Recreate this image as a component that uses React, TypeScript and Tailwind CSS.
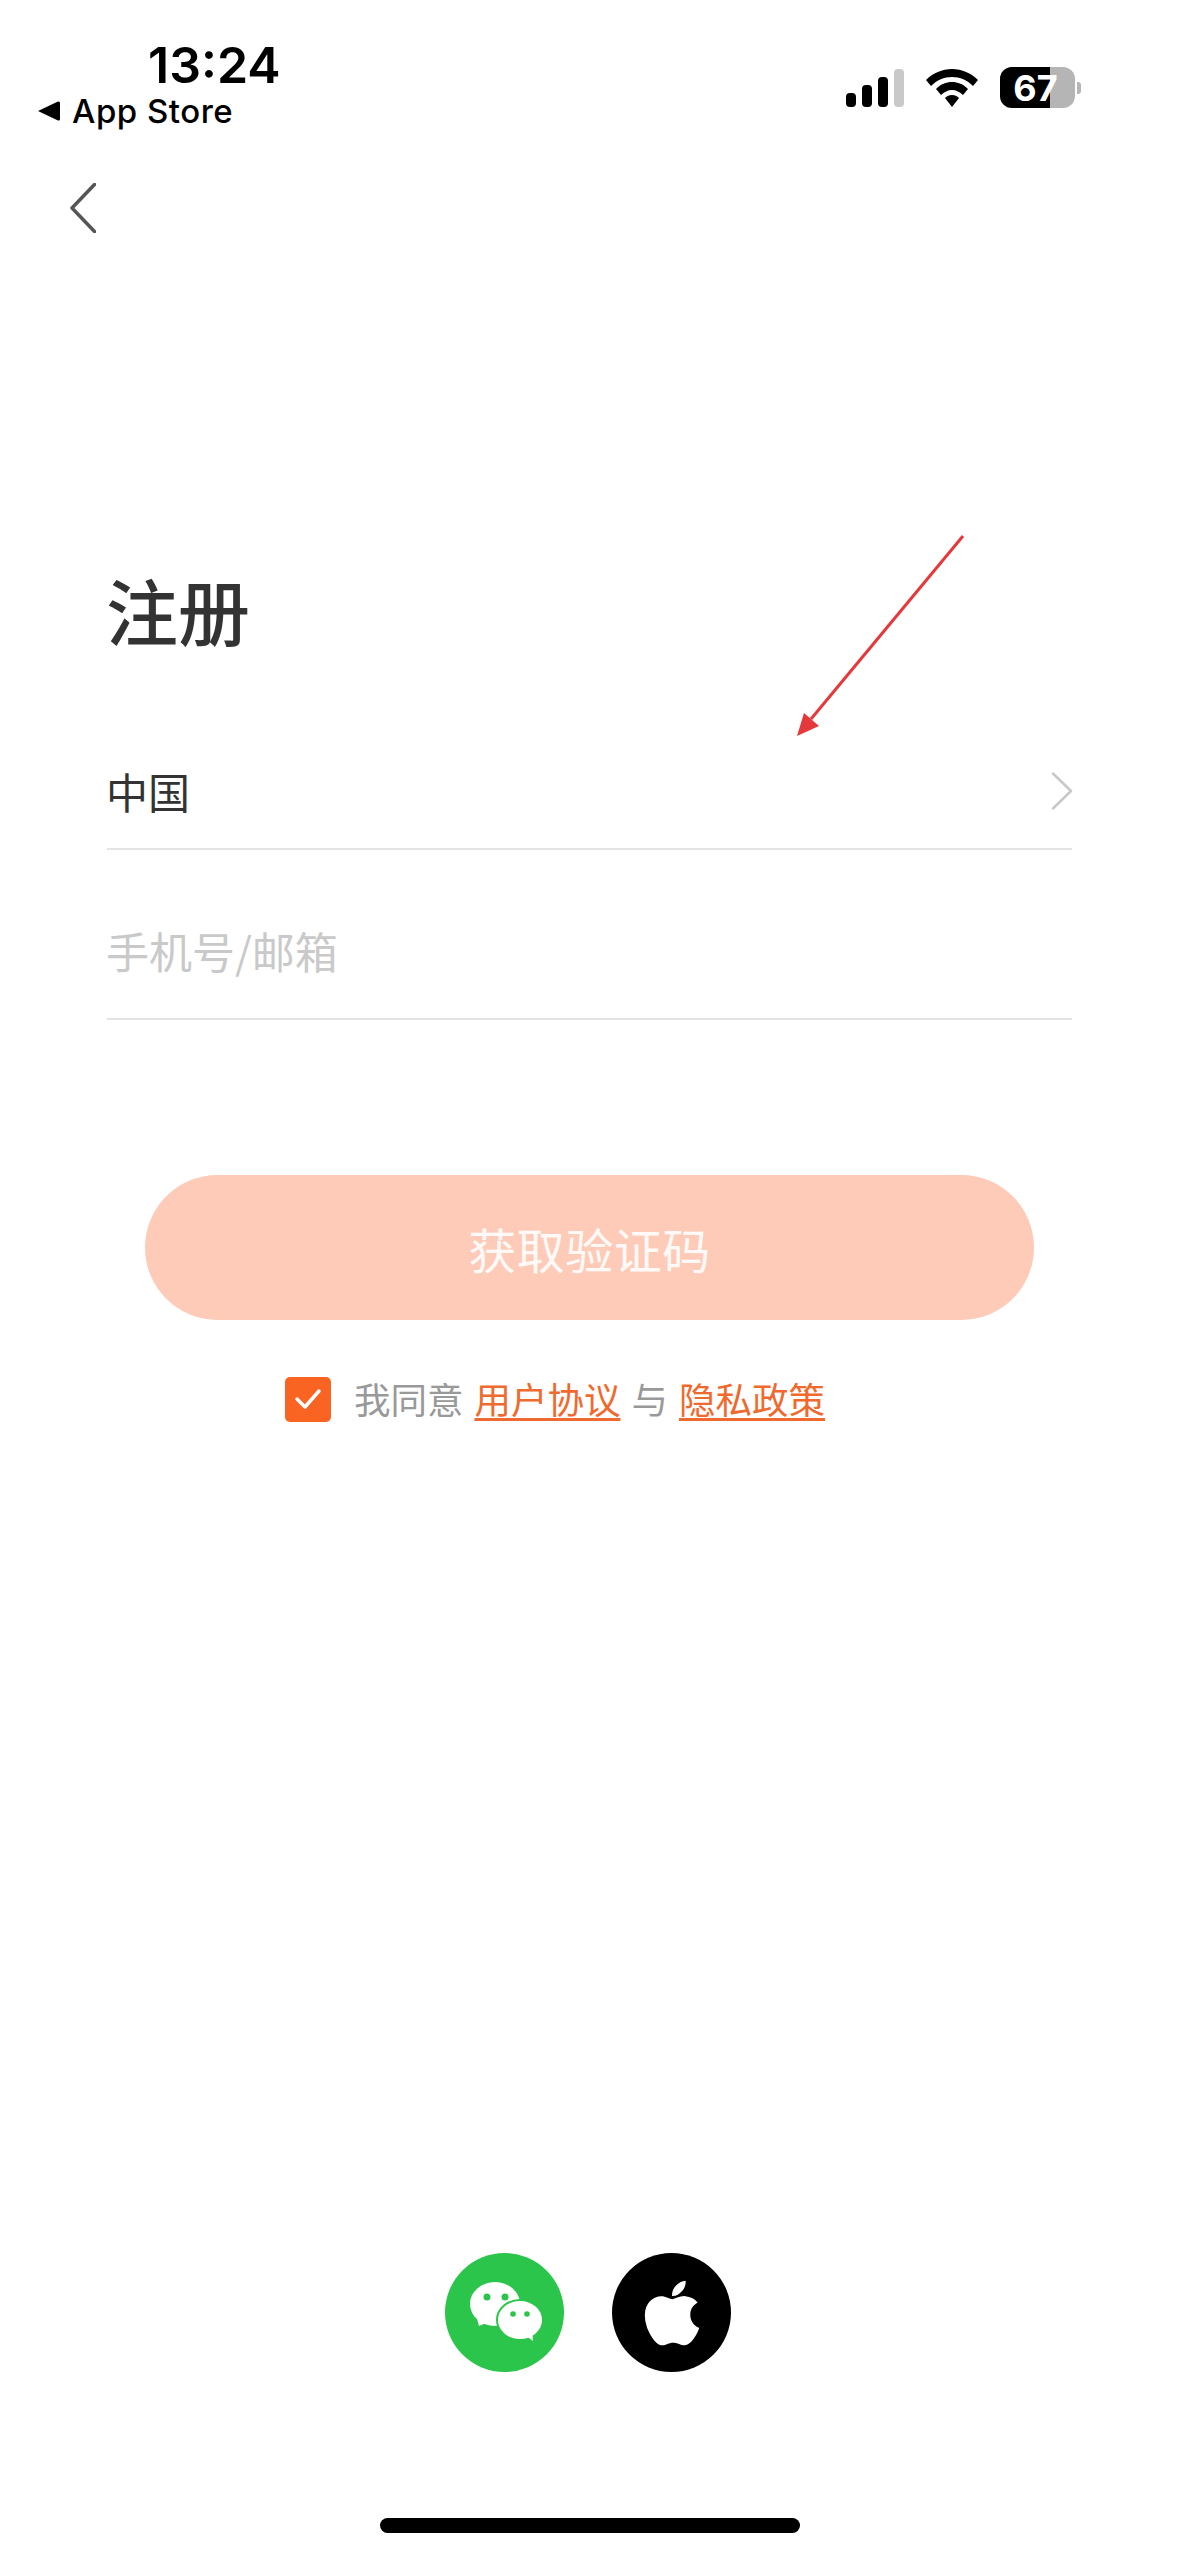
import { FaApple } from 'react-icons/fa';

const cjk = 'font-["Noto_Sans_CJK_SC","Noto_Sans",sans-serif]';

function StatusBar() {
  return (
    <div className="flex h-[140px] items-start justify-between pl-[38px] pr-[98px] pt-[37px]">
      <div className="flex flex-col">
        <span className="ml-[110px] font-['Inter'] text-[50px] font-semibold leading-[56px] text-black">13:24</span>
        <div className="-mt-[2px] flex items-center gap-[12px]">
          <svg width="22" height="20" viewBox="0 0 22 20">
            <path d="M0 10 L20 0.5 Q22 0 22 2 L22 18 Q22 20 20 19.5 Z" fill="#000" />
          </svg>
          <span className="font-['Inter'] text-[33px] font-medium leading-[40px] tracking-[0.5px] text-black">App Store</span>
        </div>
      </div>
      <div className="mt-[30px] flex items-center">
        <svg width="60" height="38" viewBox="0 0 60 38">
          <rect x="0" y="24" width="10" height="14" rx="4" fill="#000" />
          <rect x="16" y="16" width="10" height="22" rx="4" fill="#000" />
          <rect x="32" y="8" width="10" height="30" rx="4" fill="#000" />
          <rect x="48" y="0" width="10" height="38" rx="4" fill="#c9c9c9" />
        </svg>
        <svg className="ml-[20px]" width="52" height="38" viewBox="0 0 52 38">
          <path d="M26 0 C36 0 45 4 52 11 L47 17 C41 11 34 8 26 8 C18 8 11 11 5 17 L0 11 C7 4 16 0 26 0 Z" fill="#000" />
          <path d="M26 13 C32 13 37 15 42 20 L37 26 C34 23 30 21 26 21 C22 21 18 23 15 26 L10 20 C15 15 20 13 26 13 Z" fill="#000" />
          <path d="M26 26 C29 26 31 27 33 29 L26 38 L19 29 C21 27 23 26 26 26 Z" fill="#000" />
        </svg>
        <div className="ml-[22px] flex items-center">
          <div className="relative flex h-[41px] w-[75px] items-center justify-center overflow-hidden rounded-[12px] bg-[#b5b5b5] pr-[4px]">
            <div className="absolute inset-y-0 left-0 w-[50px] bg-black" />
            <span className="relative font-['Inter'] text-[36px] font-bold leading-none text-white">67</span>
          </div>
          <div className="ml-[2px] h-[12px] w-[4px] rounded-r-[3px] bg-[#b5b5b5]" />
        </div>
      </div>
    </div>
  );
}

function WechatBadge() {
  return (
    <div className="h-[119px] w-[119px] rounded-full bg-[#2cc54b]">
      <svg width="119" height="119" viewBox="0 0 119 119">
        <ellipse cx="50" cy="51" rx="25" ry="22" fill="#fff" />
        <path d="M31 62 L34 73 L46 68 Z" fill="#fff" />
        <ellipse cx="75" cy="67" rx="23" ry="20" fill="#fff" stroke="#2cc54b" strokeWidth="2" />
        <path d="M80 82 L88 88 L87 76 Z" fill="#fff" />
        <circle cx="42" cy="44" r="3.5" fill="#2cc54b" />
        <circle cx="60" cy="44" r="3.5" fill="#2cc54b" />
        <circle cx="68" cy="61" r="2.8" fill="#2cc54b" />
        <circle cx="82" cy="61" r="2.8" fill="#2cc54b" />
      </svg>
    </div>
  );
}

export default function App() {
  return (
    <div className={`relative flex h-[2556px] w-[1179px] flex-col overflow-hidden bg-white ${cjk}`}>
      <StatusBar />

      <button type="button" className="ml-[70px] mt-[43px] h-[50px] w-[26px]">
        <svg width="26" height="50" viewBox="0 0 26 50" fill="none">
          <path d="M24.5 1.5 L2 25 L24.5 48.5" stroke="#555" strokeWidth="3.5" strokeLinecap="round" strokeLinejoin="round" />
        </svg>
      </button>

      <div className="mt-[331px] flex flex-col pl-[107px] pr-[107px]">
        <h1 className="-ml-[1px] text-[72px] font-medium leading-[90px] text-[#333]">注册</h1>

        <div className="mt-[82px] flex h-[114px] items-center justify-between border-b-2 border-[#e4e4e4] pb-[3px]">
          <span className="-ml-[1px] text-[42px] leading-[56px] text-[#333]">中国</span>
          <svg className="mr-[-1px]" width="22" height="38" viewBox="0 0 22 38" fill="none">
            <path d="M2 1.5 L20 19 L2 36.5" stroke="#c8c8c8" strokeWidth="2.5" strokeLinecap="round" strokeLinejoin="round" />
          </svg>
        </div>

        <div className="flex h-[170px] items-center border-b-2 border-[#e4e4e4] pt-[32px]">
          <span className="-ml-[1px] text-[43px] leading-[56px] text-[#c9c9c9]">手机号/邮箱</span>
        </div>
      </div>

      <div className="ml-[145px] mt-[155px] flex h-[145px] w-[889px] items-center justify-center rounded-full bg-[#fdcbb8]">
        <span className="text-[48px] leading-[64px] tracking-[0.5px] text-white/90">获取验证码</span>
      </div>

      <div className="ml-[285px] mt-[54px] flex items-center text-[36.5px] leading-[50px]">
        <div className="flex h-[45px] w-[46px] items-center justify-center rounded-[5px] bg-[#fa6423]">
          <svg width="28" height="22" viewBox="0 0 28 22" fill="none">
            <path d="M3 11 L11 19 L25 3" stroke="#fff" strokeWidth="3.5" strokeLinecap="round" strokeLinejoin="round" />
          </svg>
        </div>
        <span className="ml-[23px] text-[#999]">我同意</span>
        <span className="ml-[11px] text-[#ef6a2e] underline decoration-[3px] underline-offset-[4px]">用户协议</span>
        <span className="ml-[11px] text-[#999]">与</span>
        <span className="ml-[11px] text-[#ef6a2e] underline decoration-[3px] underline-offset-[4px]">隐私政策</span>
      </div>

      <div className="mt-auto flex justify-center gap-[48px] pr-[3px]">
        <WechatBadge />
        <div className="flex h-[119px] w-[119px] items-center justify-center rounded-full bg-black">
          <FaApple size={74} color="#fff" />
        </div>
      </div>

      <div className="mb-[23px] ml-[380px] mt-[146px] h-[15px] w-[420px] rounded-full bg-black" />

      {/* red annotation arrow drawn on top of the screenshot */}
      <svg className="absolute left-[790px] top-[526px]" width="190" height="220" viewBox="0 0 190 220" fill="none">
        <path d="M173 10 L21 193" stroke="#e5383b" strokeWidth="3" />
        <path d="M7 210 L14 187 L29 200 Z" fill="#e5383b" />
      </svg>
    </div>
  );
}
